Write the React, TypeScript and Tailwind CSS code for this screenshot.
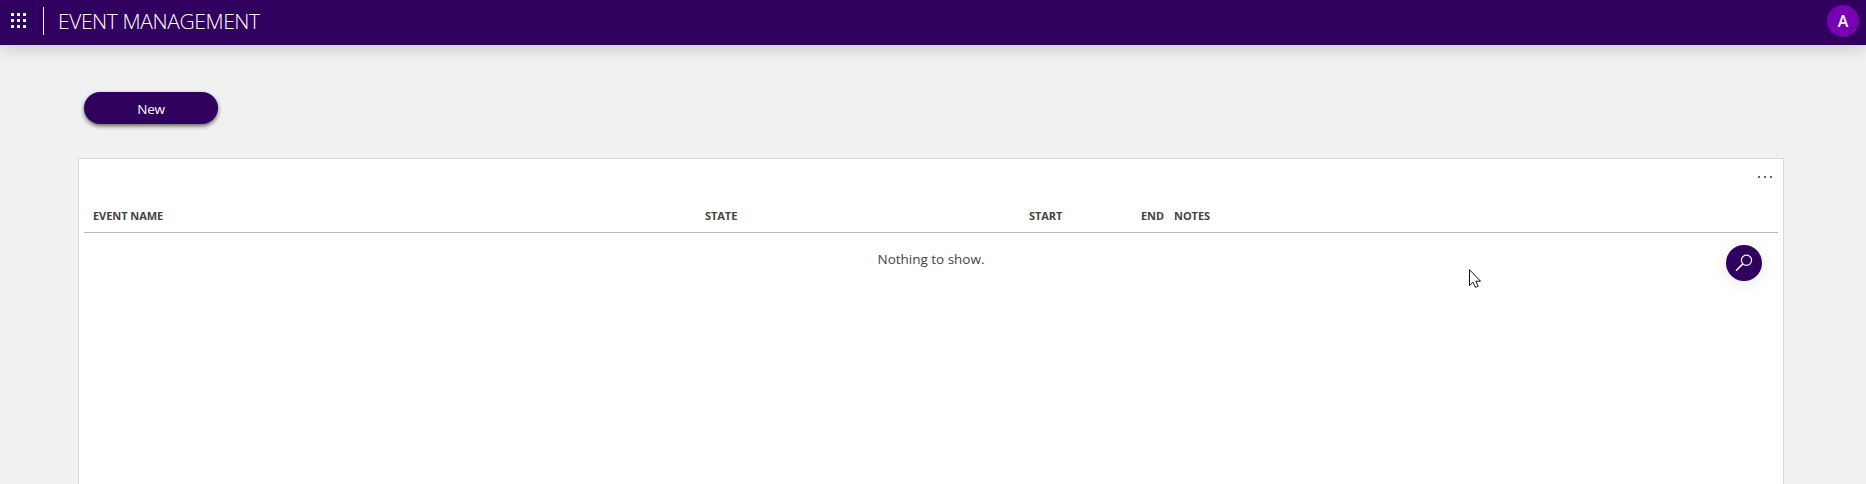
import React from "react";

function WaffleIcon() {
  const stops = [0, 6, 12];
  return (
    <svg width="16" height="16" viewBox="0 0 16 16" fill="#fff" aria-hidden="true">
      {stops.map((y) => stops.map((x) => <rect key={`${x}-${y}`} x={x} y={y} width="3" height="3" rx="0.6" />))}
    </svg>
  );
}

function Header() {
  return (
    <header className="flex h-[45px] shrink-0 items-start bg-[#30005e] text-white shadow-[0_4px_16px_rgba(0,0,0,0.16)]">
      <button className="mt-[13px] ml-[11px] block h-4 w-4" aria-label="Apps">
        <WaffleIcon />
      </button>
      <div className="mt-[7px] ml-4 h-7 w-px bg-white" />
      <h1 className="mt-[7px] ml-[14px] text-[21px] leading-7 font-light tracking-[-0.4px] whitespace-nowrap">EVENT MANAGEMENT</h1>
      <div className="mt-[5px] mr-[7px] ml-auto flex h-8 w-8 items-center justify-center rounded-full bg-[#7800b4] text-[16px] font-semibold">
        A
      </div>
    </header>
  );
}

function SearchIcon() {
  return (
    <svg width="18" height="18" viewBox="0 0 18 18" fill="none" stroke="#fff" strokeWidth="1.2" aria-hidden="true">
      <circle cx="11.5" cy="6.3" r="5.1" />
      <path d="M7.9 9.9 L1 16.8" strokeWidth="1.5" />
    </svg>
  );
}

export default function App() {
  return (
    <div className="relative flex h-[484px] w-[1866px] flex-col overflow-hidden bg-[#f1f1f1] font-['Open_Sans','Noto_Sans',sans-serif] text-[#444]">
      <Header />
      <main className="flex grow flex-col pt-[47px] pr-[82px] pl-[78px]">
        <button className="ml-[6px] h-8 w-[134px] shrink-0 rounded-full bg-[#30005e] pt-[2px] text-[13.5px] leading-[30px] font-medium tracking-[-0.2px] text-white shadow-[0_2px_4px_rgba(0,0,0,0.6)]">
          New
        </button>
        <section className="mt-[34px] flex grow flex-col border border-b-0 border-[#dadada] bg-white px-[5px]">
          <div className="flex h-[42px] shrink-0 justify-end pt-4 pr-[5px]">
            <svg width="15" height="3" viewBox="0 0 15 3" fill="#666" aria-label="More">
              <rect x="0" y="1" width="2" height="2" />
              <rect x="6" y="1" width="2" height="2" />
              <rect x="12" y="1" width="2" height="2" />
            </svg>
          </div>
          <div className="flex h-8 shrink-0 border-b border-[#bababa] pt-[6px] text-[11px] leading-[18px] font-bold tracking-[-0.06px]">
            <div className="w-[612px] pl-[9px]">EVENT NAME</div>
            <div className="w-[324px] pl-[9px]">STATE</div>
            <div className="w-[112px] pl-[9px]">START</div>
            <div className="w-[42px] pl-[9px]">END</div>
            <div>NOTES</div>
          </div>
          <p className="mt-4 text-center text-[13.5px] leading-5 tracking-[-0.02px]">Nothing to show.</p>
        </section>
      </main>
      <button
        className="absolute top-[245px] left-[1726px] flex h-9 w-9 items-center justify-center rounded-full bg-[#30005e] shadow-[0_2px_16px_rgba(0,0,0,0.1)]"
        aria-label="Search"
      >
        <SearchIcon />
      </button>
      <svg className="absolute top-[269px] left-[1469px]" width="13" height="20" viewBox="0 0 13 20" aria-hidden="true">
        <path d="M0.5 0.7 V16.6 L4 13.2 L6.5 18.4 L9.1 17.2 L6.8 12.2 H11.5 Z" fill="#fff" stroke="#111" />
      </svg>
    </div>
  );
}
